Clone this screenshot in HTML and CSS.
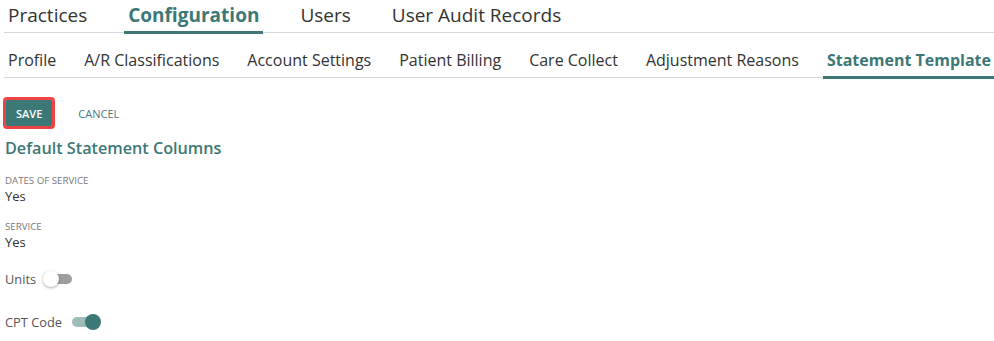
FILE: index.html
```html
<!DOCTYPE html>
<html lang="en">
<head>
    <meta charset="UTF-8">
    <title>Statement Template - Configuration</title>
    <link rel="stylesheet" href="styles.css">
</head>
<body>
    <!-- Main navigation -->
    <nav class="tabs tabs-main">
        <a class="tab" href="#practices">Practices</a>
        <a class="tab active" href="#configuration">Configuration</a>
        <a class="tab" href="#users">Users</a>
        <a class="tab" href="#audit">User Audit Records</a>
    </nav>

    <!-- Configuration sub navigation -->
    <nav class="tabs tabs-sub">
        <a class="tab" href="#profile">Profile</a>
        <a class="tab" href="#ar">A/R Classifications</a>
        <a class="tab" href="#account">Account Settings</a>
        <a class="tab" href="#billing">Patient Billing</a>
        <a class="tab" href="#care">Care Collect</a>
        <a class="tab" href="#adjustment">Adjustment Reasons</a>
        <a class="tab active" href="#statement">Statement Template</a>
    </nav>

    <main class="content">
        <div class="actions">
            <button class="btn btn-save">SAVE</button>
            <button class="btn btn-cancel">CANCEL</button>
        </div>

        <h2 class="section-title">Default Statement Columns</h2>

        <div class="field">
            <div class="field-label">DATES OF SERVICE</div>
            <div class="field-value">Yes</div>
        </div>
        <div class="field">
            <div class="field-label">SERVICE</div>
            <div class="field-value">Yes</div>
        </div>

        <label class="switch-row">
            Units
            <span class="switch"><span class="thumb"></span></span>
        </label>
        <label class="switch-row">
            CPT Code
            <span class="switch on"><span class="thumb"></span></span>
        </label>
    </main>
</body>
</html>
```

FILE: styles.css
```css
* {
    margin: 0;
    padding: 0;
    box-sizing: border-box;
    font-family: 'Open Sans', sans-serif;
}

:root {
    --primary-color: #3c7876; /* Teal */
    --primary-light: #9dbdbb;
    --line-color: #d3d8d8;
    --dark-text: #333333;
    --muted-text: #777777;
    --white: #ffffff;
}

body {
    background-color: var(--white);
    color: var(--dark-text);
}

/* Tabs */
.tabs {
    display: flex;
    margin: 0 0 0 4px;
    border-bottom: 1px solid var(--line-color);
}

.tab {
    color: var(--dark-text);
    text-decoration: none;
    padding: 0 4px;
    border-bottom: 3px solid transparent;
    margin-bottom: -2px;
    white-space: nowrap;
}

.tab.active {
    color: var(--primary-color);
    font-weight: 700;
    border-bottom-color: var(--primary-color);
}

.tabs-main {
    gap: 33px;
}

.tabs-main .tab {
    font-size: 19px;
    line-height: 24px;
    padding-top: 3px;
    padding-bottom: 4px;
}

.tabs-sub {
    gap: 20px;
    margin-top: 11px;
}

.tabs-sub .tab {
    font-size: 16px;
    line-height: 22px;
    padding-top: 5px;
    padding-bottom: 5px;
}

/* Content */
.content {
    padding: 0 5px;
}

.actions {
    display: flex;
    gap: 16px;
    margin-top: 22px;
    padding-left: 1px;
}

.btn {
    height: 26px;
    padding: 0 10px;
    border: none;
    border-radius: 1px;
    font-size: 11px;
    background: none;
    cursor: pointer;
}

.btn-save {
    background-color: var(--primary-color);
    color: var(--white);
    font-weight: 600;
    outline: 3px solid #f04444;
}

.btn-cancel {
    color: #4a7682;
}

.section-title {
    color: var(--primary-color);
    font-size: 16.2px;
    font-weight: 600;
    line-height: 22px;
    margin-top: 11px;
}

.field {
    margin-top: 16px;
}

.field + .field {
    margin-top: 16px;
}

.field-label {
    font-size: 9.7px;
    line-height: 12px;
    color: var(--muted-text);
}

.field-value {
    font-size: 13px;
    line-height: 18px;
}

/* Toggle switches */
.switch-row {
    display: flex;
    align-items: center;
    height: 20px;
    font-size: 12.8px;
    color: #555555;
    margin-top: 18px;
}

.switch-row + .switch-row {
    margin-top: 23px;
}

.switch {
    position: relative;
    width: 26px;
    height: 10px;
    margin-left: 10px;
    border-radius: 5px;
    background-color: #9e9e9e;
}

.switch .thumb {
    position: absolute;
    top: -3px;
    left: -3px;
    width: 16px;
    height: 16px;
    border-radius: 50%;
    background-color: var(--white);
    box-shadow: 0 1px 3px rgba(0,0,0,0.35);
}

.switch.on {
    background-color: var(--primary-light);
}

.switch.on .thumb {
    left: auto;
    right: -3px;
    background-color: var(--primary-color);
    box-shadow: none;
}
```
